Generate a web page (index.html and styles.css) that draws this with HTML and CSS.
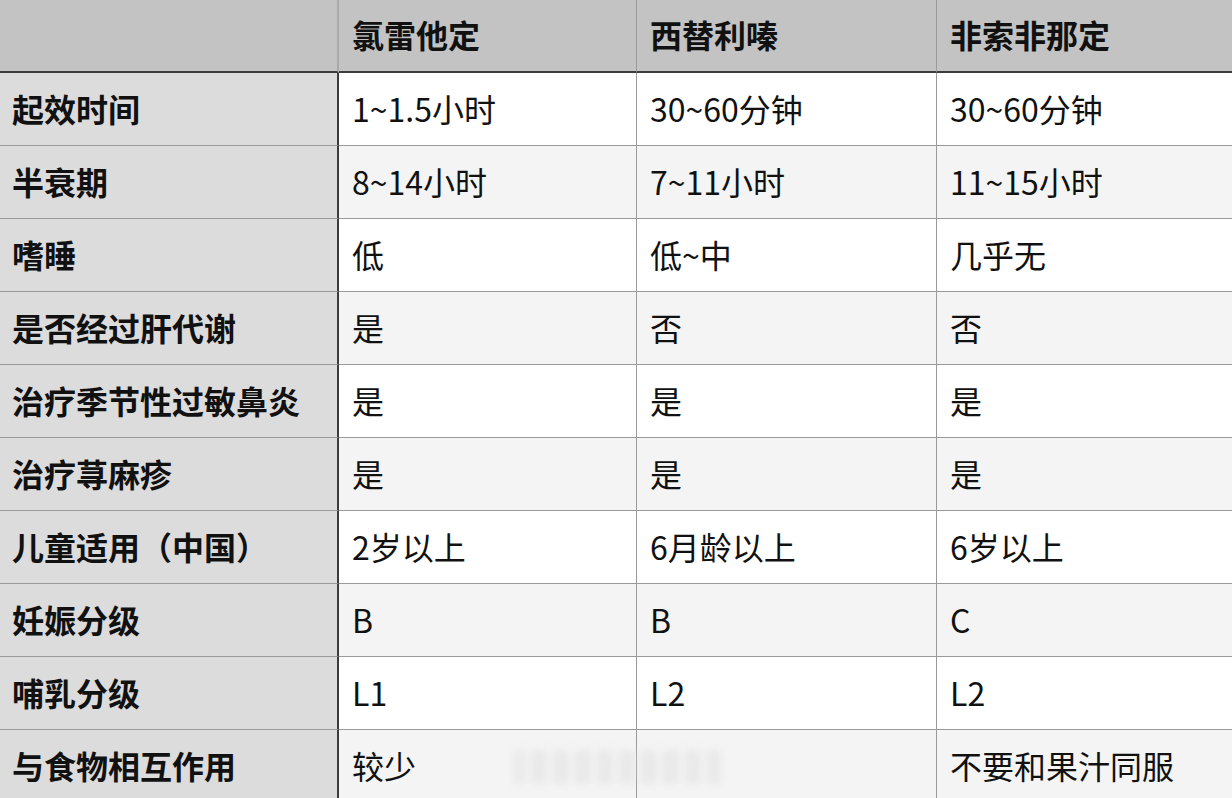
FILE: index.html
```html
<!DOCTYPE html>
<html lang="zh">
<head>
<meta charset="utf-8">
<link rel="stylesheet" href="styles.css">
</head>
<body>
<div class="sheet">
  <div class="grid">
    <div class="cell head first"></div>
    <div class="cell head">氯雷他定</div>
    <div class="cell head">西替利嗪</div>
    <div class="cell head last">非索非那定</div>

    <div class="cell label">起效时间</div>
    <div class="cell">1~1.5小时</div>
    <div class="cell">30~60分钟</div>
    <div class="cell last">30~60分钟</div>

    <div class="cell label">半衰期</div>
    <div class="cell alt">8~14小时</div>
    <div class="cell alt">7~11小时</div>
    <div class="cell alt last">11~15小时</div>

    <div class="cell label">嗜睡</div>
    <div class="cell">低</div>
    <div class="cell">低~中</div>
    <div class="cell last">几乎无</div>

    <div class="cell label">是否经过肝代谢</div>
    <div class="cell alt">是</div>
    <div class="cell alt">否</div>
    <div class="cell alt last">否</div>

    <div class="cell label">治疗季节性过敏鼻炎</div>
    <div class="cell">是</div>
    <div class="cell">是</div>
    <div class="cell last">是</div>

    <div class="cell label">治疗荨麻疹</div>
    <div class="cell alt">是</div>
    <div class="cell alt">是</div>
    <div class="cell alt last">是</div>

    <div class="cell label">儿童适用（中国）</div>
    <div class="cell">2岁以上</div>
    <div class="cell">6月龄以上</div>
    <div class="cell last">6岁以上</div>

    <div class="cell label">妊娠分级</div>
    <div class="cell alt">B</div>
    <div class="cell alt">B</div>
    <div class="cell alt last">C</div>

    <div class="cell label">哺乳分级</div>
    <div class="cell">L1</div>
    <div class="cell">L2</div>
    <div class="cell last">L2</div>

    <div class="cell label">与食物相互作用</div>
    <div class="cell alt">较少</div>
    <div class="cell alt"></div>
    <div class="cell alt last">不要和果汁同服</div>
  </div>
  <div class="watermark"></div>
</div>
</body>
</html>
```
FILE: styles.css
```css
html, body {
  margin: 0;
  padding: 0;
  background: #ffffff;
}

.sheet {
  position: relative;
  width: 1232px;
  height: 798px;
  overflow: hidden;
}

.grid {
  display: grid;
  grid-template-columns: 339px 298px 300px 295px;
  grid-template-rows: 73px repeat(10, 73px);
  font-family: "Noto Sans CJK SC", "PingFang SC", sans-serif;
  font-size: 32px;
  color: #111111;
}

.cell {
  box-sizing: border-box;
  display: flex;
  align-items: center;
  padding-left: 13px;
  padding-bottom: 2px;
  border-right: 1px solid #9a9a9a;
  border-bottom: 1px solid #9a9a9a;
  background: #ffffff;
  white-space: nowrap;
  line-height: 1;
}

.cell.alt {
  background: #f4f4f4;
}

.cell.last {
  border-right: none;
}

.cell.head {
  background: #c2c3c2;
  font-weight: 700;
  border-bottom: 2px solid #3c3c3c;
  padding-bottom: 3px;
}

.cell.head.first {
  border-right: 2px solid #a8a9a8;
}

.cell.label {
  background: #dcdcdc;
  font-weight: 700;
  padding-left: 12px;
  border-right: 2px solid #3c3c3c;
}

.watermark {
  position: absolute;
  left: 515px;
  top: 750px;
  width: 205px;
  height: 34px;
  background: repeating-linear-gradient(90deg, rgba(205,205,205,0.5) 0 8px, rgba(240,240,240,0.2) 8px 15px, rgba(215,215,215,0.45) 15px 22px);
  filter: blur(4px);
  opacity: 0.7;
}
```
